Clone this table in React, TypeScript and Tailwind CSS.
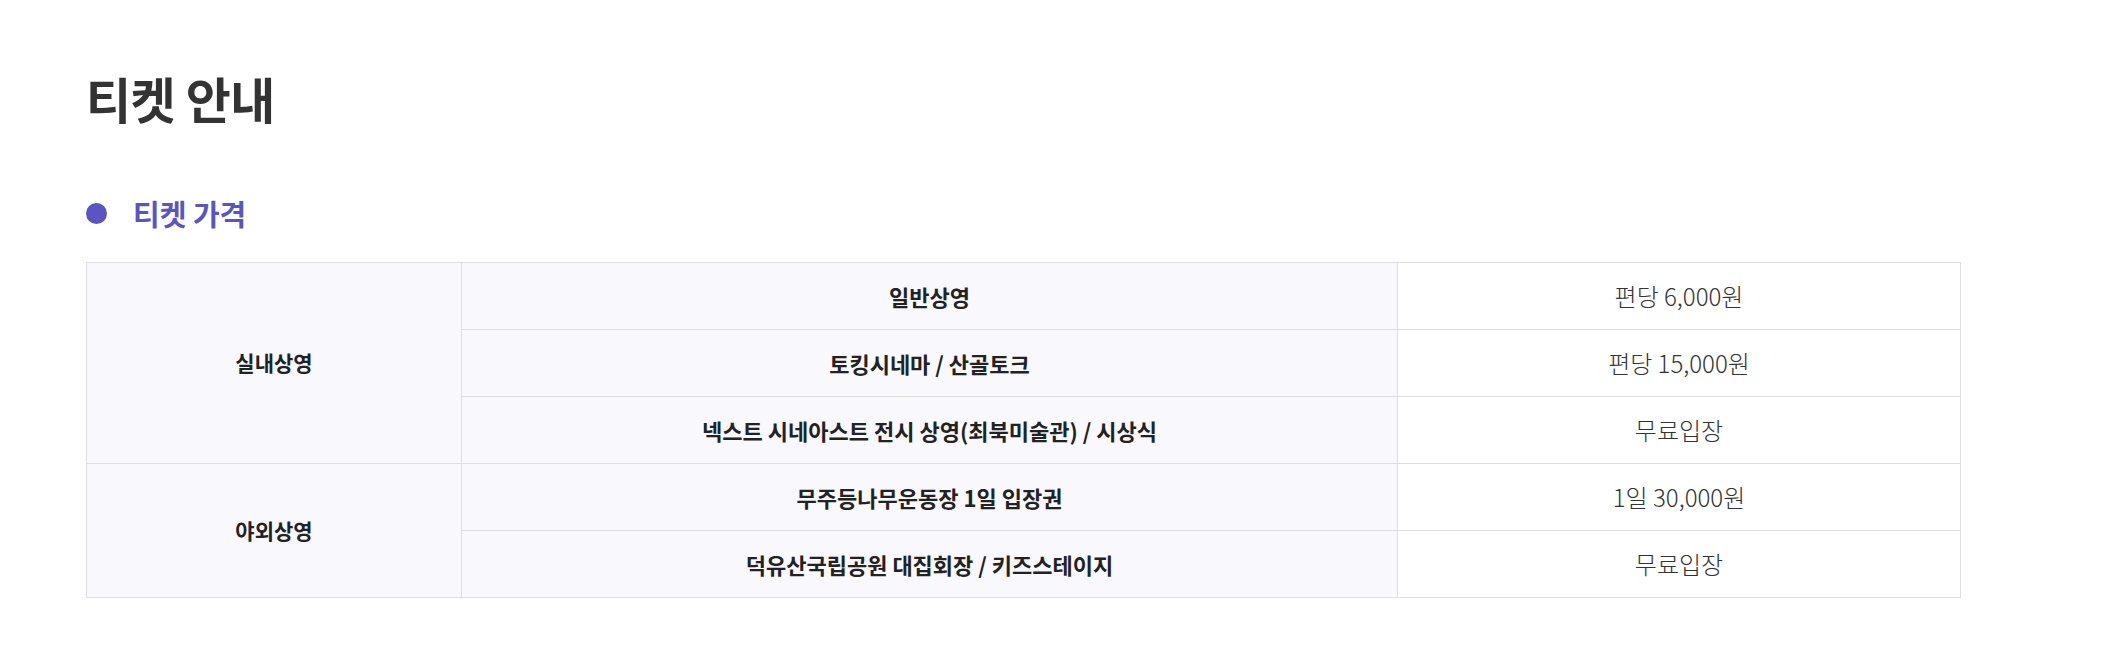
import React from "react";

const font = { fontFamily: '"Noto Sans CJK KR", "Noto Sans", sans-serif' };

export default function App() {
  const rows: { group?: string; span?: number; name: string; price: string }[] = [
    { group: "실내상영", span: 3, name: "일반상영", price: "편당 6,000원" },
    { name: "토킹시네마 / 산골토크", price: "편당 15,000원" },
    { name: "넥스트 시네아스트 전시 상영(최북미술관) / 시상식", price: "무료입장" },
    { group: "야외상영", span: 2, name: "무주등나무운동장 1일 입장권", price: "1일 30,000원" },
    { name: "덕유산국립공원 대집회장 / 키즈스테이지", price: "무료입장" },
  ];
  return (
    <div className="w-[2117px] h-[653px] bg-white pl-[86px] pt-[69px]" style={font}>
      <h1 className="text-[49px] leading-[58px] font-bold text-[#333333] tracking-[-0.5px]">티켓 안내</h1>
      <div className="mt-[68px] flex items-center h-[36px]">
        <span className="w-[21px] h-[21px] rounded-full bg-[#5b55c1]" />
        <h2 className="ml-[26px] text-[29px] font-bold text-[#5b55c1] leading-[36px]">티켓 가격</h2>
      </div>
      <table className="mt-[31px] w-[1874px] border-collapse table-fixed">
        <colgroup>
          <col className="w-[375px]" />
          <col className="w-[936px]" />
          <col className="w-[563px]" />
        </colgroup>
        <tbody>
          {rows.map((r, i) => (
            <tr key={i} className="h-[67px]">
              {r.group && (
                <td
                  rowSpan={r.span}
                  className="border border-[#dedede] bg-[#f8f8fd] text-center text-[21px] font-bold text-[#222222]"
                >
                  {r.group}
                </td>
              )}
              <td className="border border-[#dedede] bg-[#f8f8fd] text-center text-[22px] font-bold text-[#222222]">
                {r.name}
              </td>
              <td className="border border-[#dedede] bg-white text-center text-[24px] font-light text-[#333333]">
                {r.price}
              </td>
            </tr>
          ))}
        </tbody>
      </table>
    </div>
  );
}
